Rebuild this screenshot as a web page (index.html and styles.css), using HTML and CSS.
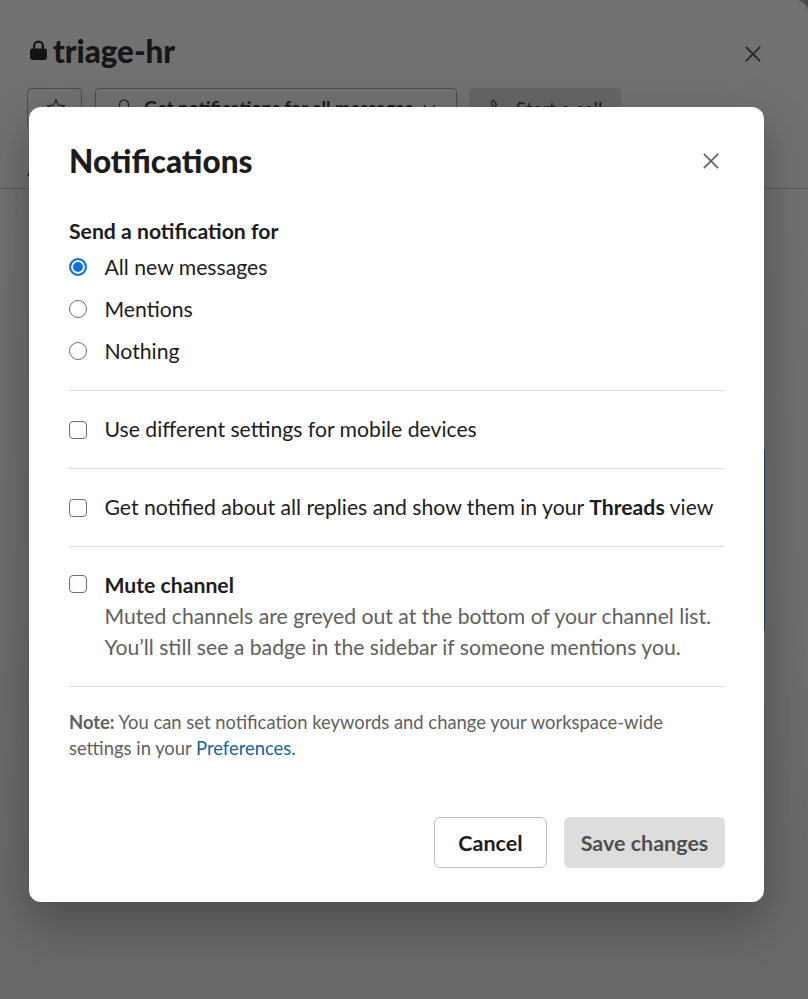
FILE: index.html
```html
<!DOCTYPE html>
<html lang="en">
<head>
    <meta charset="UTF-8">
    <meta name="viewport" content="width=device-width, initial-scale=1.0">
    <title>Notifications</title>
    <link rel="stylesheet" href="styles.css">
</head>
<body>
    <div class="channel-page">
        <header class="channel-head">
            <h1 class="channel-name">
                <svg class="lock-icon" viewBox="0 0 18 22" aria-hidden="true"><path d="M3.200 9V6.200a5.800 5.800 0 0 1 11.600 0V9h.7A2.500 2.500 0 0 1 18 11.500v7A2.500 2.500 0 0 1 15.500 21h-13A2.500 2.500 0 0 1 0 18.500v-7A2.500 2.500 0 0 1 2.500 9zm2.300 0h7V6.200a3.500 3.500 0 0 0-7 0z"/></svg>
                triage-hr
            </h1>
            <svg class="page-close" viewBox="0 0 18 18" aria-hidden="true"><path d="M1 1l16 16M17 1L1 17"/></svg>
        </header>
        <div class="channel-actions">
            <button class="ghost-btn star-btn" type="button">
                <svg class="btn-icon" viewBox="0 0 22 22" aria-hidden="true"><path d="M11 2l2.700 5.900 6.300.7-4.700 4.300 1.300 6.300-5.600-3.200-5.600 3.200 1.300-6.300L2 8.600l6.300-.7z"/></svg>
            </button>
            <button class="ghost-btn notify-btn" type="button">
                <svg class="btn-icon" viewBox="0 0 22 22" aria-hidden="true"><path d="M11 2c-3.500 0-5 3-5 6.500 0 3-1.500 5-2.500 6.500h15c-1-1.500-2.500-3.500-2.500-6.500C16 5 14.500 2 11 2z"/></svg>
                <span>Get notifications for all messages</span>
                <svg class="chevron" viewBox="0 0 14 8" aria-hidden="true"><path d="M1 1l6 6 6-6"/></svg>
            </button>
            <button class="ghost-btn call-btn" type="button">
                <svg class="btn-icon" viewBox="0 0 22 22" aria-hidden="true"><path d="M6 2.500c-2 .5-2.500 2.500-1.500 5 1.500 4.500 5 9 9.500 10.500 1.500.5 3 0 3.500-1.500l-3-3-2 1c-2-1-4-3.500-4.500-6l1.500-1.500z"/></svg>
                <span>Start a call</span>
            </button>
        </div>
        <nav class="channel-tabs">About</nav>
    </div>

    <div class="side-sliver"></div>

    <section class="modal">
        <header class="modal-head">
            <h2 class="modal-title">Notifications</h2>
            <svg class="modal-close" viewBox="0 0 18 18" aria-hidden="true"><path d="M1 1l16 16M17 1L1 17"/></svg>
        </header>

        <form class="notify-form">
            <div class="group group-radios">
                <div class="group-label">Send a notification for</div>
                <label class="row radio-row"><input class="radio" type="radio" name="level" checked> All new messages</label>
                <label class="row radio-row"><input class="radio" type="radio" name="level"> Mentions</label>
                <label class="row radio-row"><input class="radio" type="radio" name="level"> Nothing</label>
            </div>

            <div class="group">
                <label class="row"><input class="check" type="checkbox"> Use different settings for mobile devices</label>
            </div>

            <div class="group">
                <label class="row"><input class="check" type="checkbox"> <span>Get notified about all replies and show them in your <b>Threads</b> view</span></label>
            </div>

            <div class="group">
                <label class="row row-top">
                    <input class="check" type="checkbox">
                    <span>
                        <b>Mute channel</b>
                        <span class="hint">Muted channels are greyed out at the bottom of your channel list. You’ll still see a badge in the sidebar if someone mentions you.</span>
                    </span>
                </label>
            </div>

            <p class="note"><b>Note:</b> You can set notification keywords and change your workspace-wide settings in your <a href="#">Preferences.</a></p>

            <footer class="modal-actions">
                <button class="btn btn-cancel" type="button">Cancel</button>
                <button class="btn btn-save" type="button">Save changes</button>
            </footer>
        </form>
    </section>
</body>
</html>
```

FILE: styles.css
```css
/* Page behind the dialog */
html {
    height: 100%;
    background: #4c4c4c;
}

body {
    height: 100%;
    margin: 0;
    font-family: 'Lato', 'Liberation Sans', sans-serif;
    font-size: 21.2px;
    color: #1d1c1d;
    background: linear-gradient(180deg, #727272 0%, #6e6e6e 60%, #686868 100%);
    border-top-right-radius: 12px;
    overflow: hidden;
}

.channel-page {
    color: #161616;
}

.channel-head {
    display: flex;
    align-items: center;
    justify-content: space-between;
    height: 88px;
    padding: 13px 47px 0 30px;
    box-sizing: border-box;
}

.channel-name {
    display: flex;
    align-items: center;
    gap: 6px;
    margin: 0;
    font-size: 31.300px;
    font-weight: 900;
    line-height: 40px;
}

.lock-icon {
    width: 17px;
    height: 21px;
    fill: #141414;
}

.page-close {
    width: 16px;
    height: 16px;
    margin-top: 6px;
    fill: none;
    stroke: #262626;
    stroke-width: 1.800;
}

.channel-actions {
    display: flex;
    gap: 12px;
    padding-left: 27px;
}

.ghost-btn {
    display: flex;
    align-items: center;
    gap: 10px;
    height: 38px;
    padding: 0 0 0 18px;
    box-sizing: content-box;
    border: 1px solid #4d4d4d;
    border-radius: 4px;
    background: none;
    font-family: inherit;
    font-size: 18.300px;
    font-weight: 700;
    white-space: nowrap;
    color: #1c1c1c;
}

.star-btn {
    width: 35px;
}

.notify-btn {
    width: 342px;
    margin-left: 1px;
}

.call-btn {
    width: 132px;
    gap: 8px;
    padding-left: 18px;
    border-color: #666;
    background: #666;
    font-size: 19px;
    font-weight: 400;
}

.btn-icon {
    width: 20px;
    height: 20px;
    flex: none;
    fill: none;
    stroke: #262626;
    stroke-width: 1.500;
}

.chevron {
    width: 13px;
    height: 8px;
    fill: none;
    stroke: #262626;
    stroke-width: 1.500;
}

.channel-tabs {
    margin-top: 28px;
    padding: 0 0 8px 27px;
    height: 24px;
    border-bottom: 1px solid #5c5c5c;
    font-size: 20px;
    line-height: 24px;
    color: #222;
}

.side-sliver {
    position: absolute;
    left: 760px;
    top: 450px;
    width: 5px;
    height: 180px;
    background: #2c4a5e;
}

/* Dialog */
.modal {
    position: absolute;
    left: 29px;
    top: 107px;
    width: 735px;
    height: 795px;
    padding: 0 39px 0 40px;
    box-sizing: border-box;
    background: #fff;
    border-radius: 12px;
    box-shadow: 0 18px 48px rgba(0, 0, 0, 0.3);
}

.modal-head {
    display: flex;
    align-items: center;
    justify-content: space-between;
    height: 40px;
    padding: 34px 0 0;
}

.modal-title {
    margin: 0;
    font-size: 31.500px;
    font-weight: 900;
    line-height: 40px;
    color: #1d1c1d;
}

.modal-close {
    width: 16px;
    height: 16px;
    margin-right: 6px;
    fill: none;
    stroke: #616061;
    stroke-width: 1.800;
}

.group {
    padding: 23px 0;
    border-bottom: 1.500px solid #dedede;
}

.group-radios {
    padding: 35px 0 18px;
}

.group-label {
    font-weight: 700;
    line-height: 30px;
}

.row {
    display: flex;
    align-items: center;
    gap: 17.500px;
    line-height: 31px;
}

.row-top {
    align-items: flex-start;
}

.radio-row {
    height: 42px;
}

.radio, .check {
    appearance: none;
    flex: none;
    width: 18px;
    height: 18px;
    margin: 0;
    background: #fff;
    border: 1.500px solid #6f6e6f;
}

.radio {
    border-radius: 50%;
}

.radio:checked {
    border: 2px solid #0f6fec;
    box-shadow: inset 0 0 0 2px #fff;
    background: #0f6fec;
}

.check {
    border-radius: 4px;
}

.row-top .check {
    margin-top: 5px;
}

.hint {
    display: block;
    color: #616061;
}

.note {
    margin: 22px 0 0;
    font-size: 18.400px;
    line-height: 26px;
    color: #616061;
}

.note a {
    color: #1264a3;
    text-decoration: none;
}

.modal-actions {
    display: flex;
    justify-content: flex-end;
    gap: 17px;
    margin-top: 56px;
}

.btn {
    height: 51px;
    border-radius: 6px;
    box-sizing: border-box;
    font-family: inherit;
    font-size: 21.500px;
    font-weight: 700;
}

.btn-cancel {
    width: 113px;
    background: #fff;
    border: 1.500px solid #c0c0c0;
    color: #1d1c1d;
}

.btn-save {
    width: 161px;
    background: #dddddd;
    border: 0;
    color: #4f4f4f;
}
```
